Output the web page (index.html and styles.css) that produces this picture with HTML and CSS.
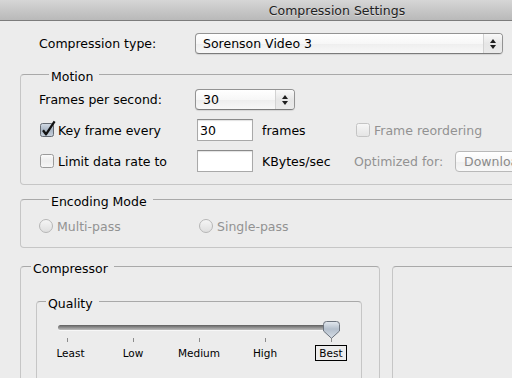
FILE: index.html
```html
<!DOCTYPE html>
<html>
<head>
<meta charset="utf-8">
<link rel="stylesheet" href="styles.css">
</head>
<body>
<div class="titlebar"><span>Compression Settings</span></div>
<div class="content">
  <div class="type-row">
    <span class="lbl">Compression type:</span>
    <div class="popup wide"><span class="val">Sorenson Video 3</span><span class="arrows"><i class="up"></i><i class="down"></i></span></div>
  </div>

  <fieldset class="group motion">
    <legend>Motion</legend>
    <div class="mrow r1">
      <span>Frames per second:</span>
      <div class="popup fps"><span class="val">30</span><span class="arrows"><i class="up"></i><i class="down"></i></span></div>
    </div>
    <div class="mrow r2">
      <label class="cbl">
        <svg class="box" width="14" height="14" viewBox="0 0 14 14">
          <defs><linearGradient id="cg" x1="0" y1="0" x2="0" y2="1"><stop offset="0" stop-color="#d3dbe5"/><stop offset="0.5" stop-color="#a9b5c4"/><stop offset="1" stop-color="#c8d1dc"/></linearGradient></defs>
          <rect x="0.5" y="0.5" width="13" height="13" rx="2" fill="url(#cg)" stroke="#646a73"/>
          <path d="M3 7.2 L6 11.3 L14.6 -1.6" fill="none" stroke="#121212" stroke-width="2.3" stroke-linejoin="round"/>
        </svg>Key frame every</label>
      <div class="field">30</div>
      <span class="unit">frames</span>
      <label class="cbl dis reorder">
        <svg class="box" width="14" height="14" viewBox="0 0 14 14">
          <defs><linearGradient id="dg" x1="0" y1="0" x2="0" y2="1"><stop offset="0" stop-color="#f7f7f7"/><stop offset="1" stop-color="#e4e4e4"/></linearGradient></defs>
          <rect x="0.5" y="0.5" width="13" height="13" rx="2" fill="url(#dg)" stroke="#c4c4c4"/>
        </svg>Frame reordering</label>
    </div>
    <div class="mrow r3">
      <label class="cbl">
        <svg class="box" width="14" height="14" viewBox="0 0 14 14">
          <defs><linearGradient id="ug" x1="0" y1="0" x2="0" y2="1"><stop offset="0" stop-color="#fbfbfb"/><stop offset="0.5" stop-color="#ececec"/><stop offset="1" stop-color="#f6f6f6"/></linearGradient></defs>
          <rect x="0.5" y="0.5" width="13" height="13" rx="2" fill="url(#ug)" stroke="#9a9a9a"/>
        </svg>Limit data rate to</label>
      <div class="field"></div>
      <span class="unit">KBytes/sec</span>
      <div class="opt">
        <span class="opt-lbl">Optimized for:</span>
        <div class="popup dl"><span class="val">Download</span></div>
      </div>
    </div>
  </fieldset>

  <fieldset class="group encoding">
    <legend>Encoding Mode</legend>
    <div class="radios">
      <label class="rad">
        <svg width="14" height="14" viewBox="0 0 14 14">
          <defs><linearGradient id="rg" x1="0" y1="0" x2="0" y2="1"><stop offset="0" stop-color="#f6f6f6"/><stop offset="1" stop-color="#dedede"/></linearGradient></defs>
          <circle cx="7" cy="7" r="6.5" fill="url(#rg)" stroke="#b6b6b6"/>
        </svg>Multi-pass</label>
      <label class="rad">
        <svg width="14" height="14" viewBox="0 0 14 14">
          <circle cx="7" cy="7" r="6.5" fill="url(#rg)" stroke="#b6b6b6"/>
        </svg>Single-pass</label>
    </div>
  </fieldset>

  <div class="bottom-row">
    <fieldset class="group compressor">
      <legend>Compressor</legend>
      <fieldset class="group quality">
        <legend>Quality</legend>
        <div class="slider">
          <div class="track">
            <svg class="thumb" width="17" height="18" viewBox="0 0 17 18">
              <defs><linearGradient id="tg" x1="0" y1="0" x2="0" y2="1"><stop offset="0" stop-color="#e4e9ef"/><stop offset="0.45" stop-color="#b4bfcc"/><stop offset="1" stop-color="#d6dde6"/></linearGradient></defs>
              <path d="M3.5 0.5 H13.5 Q16.5 0.5 16.5 3.5 V10 L8.5 17.3 L0.5 10 V3.5 Q0.5 0.5 3.5 0.5 Z" fill="url(#tg)" stroke="#6c737d"/>
            </svg>
          </div>
          <div class="scale">
            <div class="stop"><i class="tick"></i><span class="tl first">Least</span></div>
            <div class="stop"><i class="tick"></i><span class="tl">Low</span></div>
            <div class="stop"><i class="tick"></i><span class="tl">Medium</span></div>
            <div class="stop"><i class="tick"></i><span class="tl">High</span></div>
            <div class="stop"><i class="tick"></i><span class="tl sel">Best</span></div>
          </div>
        </div>
      </fieldset>
    </fieldset>
    <div class="group side"></div>
  </div>
</div>
</body>
</html>
```
FILE: styles.css
```css
html, body {
  margin: 0;
  padding: 0;
}
body {
  width: 512px;
  height: 378px;
  overflow: hidden;
  background: #ececec;
  font-family: "DejaVu Sans", "Liberation Sans", sans-serif;
  font-size: 12.5px;
  color: #000;
}

.titlebar {
  width: 674px;
  height: 20px;
  border-bottom: 1px solid #7c7c7c;
  background: linear-gradient(#d6d6d6, #b9b9b9);
  display: flex;
  justify-content: center;
  align-items: center;
  color: #222;
  text-shadow: 0 1px 0 rgba(255,255,255,0.45);
}

.content {
  width: 510px;
  padding-left: 20px;
}

.type-row {
  display: flex;
  align-items: center;
  height: 21px;
  margin: 12px 0 0 19px;
}
.type-row .lbl {
  width: 156px;
}

.popup {
  box-sizing: border-box;
  height: 21px;
  border: 1px solid #939393;
  border-bottom-color: #7b7b7b;
  border-radius: 4px;
  background: linear-gradient(#ffffff, #f7f7f7 50%, #eeeeee 52%, #f8f8f8);
  box-shadow: 0 1px 1px rgba(0,0,0,0.10);
  display: flex;
  align-items: center;
  padding-left: 7px;
}
.popup .val {
  flex: 1;
}
.popup .arrows {
  width: 18px;
  align-self: stretch;
  border-left: 1px solid #d2d2d2;
  border-radius: 0 3px 3px 0;
  background: linear-gradient(#f9f9f9, #e6e6e6 52%, #eaeaea);
  display: flex;
  flex-direction: column;
  align-items: center;
  justify-content: center;
  gap: 2px;
}
.up {
  display: block;
  width: 0;
  height: 0;
  border-left: 3px solid transparent;
  border-right: 3px solid transparent;
  border-bottom: 4px solid #1e1e1e;
}
.down {
  display: block;
  width: 0;
  height: 0;
  border-left: 3px solid transparent;
  border-right: 3px solid transparent;
  border-top: 4px solid #1e1e1e;
}
.popup.wide {
  width: 308px;
}

.group {
  margin: 0;
  padding: 0;
  min-width: 0;
  border: 1px solid #c6c6c6;
  border-top-color: #a9a9a9;
  border-radius: 4px;
}
.group > legend {
  padding: 6px 6px 0 2px;
  margin-left: 10px;
  line-height: 16px;
}

.motion {
  margin-top: 9px;
  padding: 0 0 12px 18px;
}
.mrow {
  display: grid;
  grid-template-columns: 158px 56px 101px auto;
  align-items: center;
}
.r1 {
  margin-top: 4px;
  height: 21px;
}
.r2 {
  margin-top: 9px;
  height: 22px;
}
.r3 {
  margin-top: 9px;
  height: 22px;
}
.popup.fps {
  grid-column: 2 / span 2;
  width: 100px;
  margin-left: -2px;
}
.cbl {
  display: flex;
  align-items: center;
  gap: 4px;
  margin-left: 1px;
  white-space: nowrap;
}
.cbl svg {
  overflow: visible;
  flex: none;
}
.cbl.dis {
  color: #929292;
}
.reorder {
  margin-left: 2px;
}
.field {
  box-sizing: border-box;
  width: 56px;
  height: 22px;
  border: 1px solid #a9a9a9;
  border-top-color: #8a8a8a;
  background: #fff;
  box-shadow: inset 0 1px 1px rgba(0,0,0,0.12);
  padding-left: 2px;
  display: flex;
  align-items: center;
}
.unit {
  padding-left: 9px;
}
.opt {
  display: flex;
  align-items: center;
}
.opt-lbl {
  width: 101px;
  color: #929292;
  white-space: nowrap;
}
.popup.dl {
  width: 100px;
  padding-left: 8px;
  color: #8a8a8a;
  border-color: #b9b9b9;
  box-shadow: none;
}

.encoding {
  margin-top: 3px;
  padding: 0 0 13px 18px;
}
.radios {
  margin-top: 8px;
  height: 16px;
  display: grid;
  grid-template-columns: 160px auto;
  align-items: center;
  color: #929292;
}
.rad {
  display: flex;
  align-items: center;
  gap: 4px;
}

.bottom-row {
  display: flex;
  align-items: flex-start;
  margin-top: 7px;
}
.compressor {
  width: 360px;
  box-sizing: border-box;
  flex: none;
  margin-right: 12px;
  padding: 0;
}
.side {
  flex: 1;
  height: 200px;
  margin-top: 11px;
}
.quality {
  width: 326px;
  box-sizing: border-box;
  margin: 13px 0 0 15px;
  height: 120px;
}
.quality > legend {
  margin-left: 9px;
}

.slider {
  width: 330px;
  margin: 13px 0 0 -3px;
}
.track {
  position: relative;
  margin-left: 24px;
  width: 281px;
  height: 5px;
  border-radius: 3px;
  background: linear-gradient(#5f5f5f, #8e8e8e 50%, #bdbdbd);
  box-shadow: 0 1px 0 rgba(255,255,255,0.6);
}
.thumb {
  position: absolute;
  left: 265px;
  top: -4px;
}
.scale {
  display: grid;
  grid-template-columns: repeat(5, 66px);
  margin-top: 8px;
}
.stop {
  display: flex;
  flex-direction: column;
  align-items: center;
}
.tick {
  display: block;
  width: 1px;
  height: 4px;
  background: #8c8c8c;
}
.tl {
  margin-top: 3px;
  font-size: 10.5px;
  line-height: 14px;
  padding: 0 3px;
  border: 1px solid transparent;
}
.tl.first {
  margin-left: 7px;
}
.tl.sel {
  border-color: #000;
}
```
